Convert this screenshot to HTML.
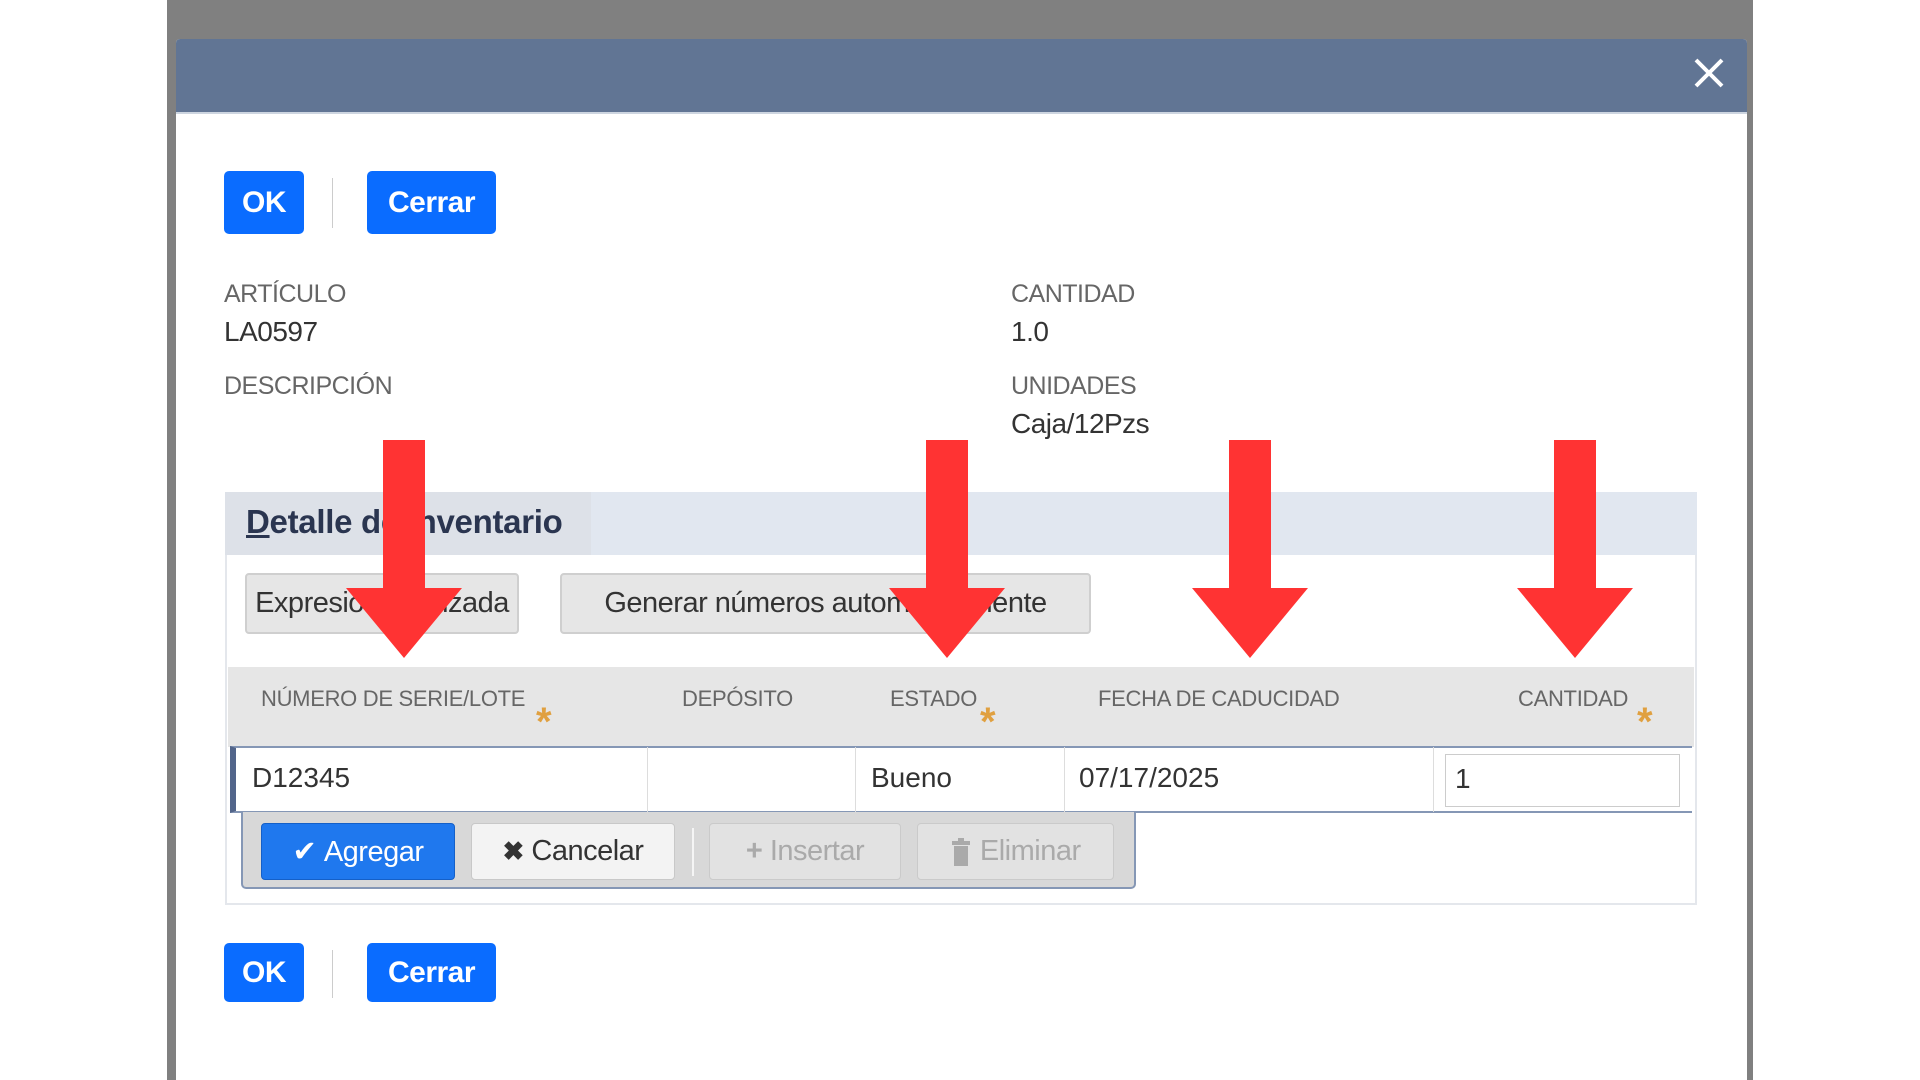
<!DOCTYPE html>
<html><head><meta charset="utf-8"><style>
*{margin:0;padding:0;box-sizing:border-box}
body{width:1920px;height:1080px;position:relative;overflow:hidden;background:#fff;font-family:"Liberation Sans Narrow","Liberation Sans",sans-serif;}
.a{position:absolute}
.btn{position:absolute;background:#0a6cff;color:#fff;border-radius:5px;font-size:30px;font-weight:bold;display:flex;align-items:center;justify-content:center;letter-spacing:-0.5px}
.lbl{position:absolute;font-size:25px;color:#666;letter-spacing:-0.5px}
.val{position:absolute;font-size:28px;color:#333;letter-spacing:-0.5px}
.gb{position:absolute;background:#e6e6e6;border:2px solid #cfcfcf;border-radius:4px;font-size:29px;color:#333;display:flex;align-items:center;justify-content:center;letter-spacing:-0.5px}
.th{position:absolute;top:686px;font-size:22px;color:#666;letter-spacing:-0.3px}
.ast{position:absolute;top:700px;color:#e0a040;font-size:40px;font-weight:bold}
.td{position:absolute;top:762px;font-size:28px;color:#333}
.vd{position:absolute;top:747px;height:65px;width:1px;background:#ddd}
.ab{position:absolute;top:823px;height:57px;border-radius:4px;font-size:29px;display:flex;align-items:center;justify-content:center;letter-spacing:-0.5px}
.arr{position:absolute;top:440px}
</style></head><body>
<div class="a" style="left:167px;top:0;width:1586px;height:1080px;background:#808080"></div>
<div class="a" style="left:176px;top:39px;width:1571px;height:1041px;background:#fff;border-radius:4px 4px 0 0;overflow:hidden">
  <div class="a" style="left:0;top:0;width:100%;height:75px;background:#617594;border-bottom:2px solid #cdd5e0"></div>
</div>
<svg class="a" style="left:1693px;top:57px" width="32" height="32" viewBox="0 0 32 32"><path d="M3 3L29 29M29 3L3 29" stroke="#fff" stroke-width="4"/></svg>

<div class="btn" style="left:224px;top:171px;width:80px;height:63px">OK</div>
<div class="a" style="left:332px;top:178px;width:1px;height:50px;background:#ccc"></div>
<div class="btn" style="left:367px;top:171px;width:129px;height:63px">Cerrar</div>

<div class="lbl" style="left:224px;top:280px">ARTÍCULO</div>
<div class="val" style="left:224px;top:316px">LA0597</div>
<div class="lbl" style="left:224px;top:372px">DESCRIPCIÓN</div>
<div class="lbl" style="left:1011px;top:280px">CANTIDAD</div>
<div class="val" style="left:1011px;top:316px">1.0</div>
<div class="lbl" style="left:1011px;top:372px">UNIDADES</div>
<div class="val" style="left:1011px;top:408px">Caja/12Pzs</div>

<div class="a" style="left:225px;top:492px;width:1472px;height:413px;border:2px solid #e4e7ec;border-top:none"></div>
<div class="a" style="left:225px;top:492px;width:1472px;height:63px;background:#e1e7f0"></div>
<div class="a" style="left:225px;top:492px;width:366px;height:63px;background:#dde1e8"></div>
<div class="a" style="left:246px;top:503px;font-size:33px;font-weight:bold;color:#2a3550;letter-spacing:-0.3px"><u>D</u>etalle de inventario</div>

<div class="gb" style="left:245px;top:573px;width:274px;height:61px">Expresión avanzada</div>
<div class="gb" style="left:560px;top:573px;width:531px;height:61px">Generar números automáticamente</div>

<div class="a" style="left:228px;top:667px;width:1466px;height:80px;background:#e6e6e6"></div>
<div class="th" style="left:261px">NÚMERO DE SERIE/LOTE</div>
<div class="th" style="left:682px">DEPÓSITO</div>
<div class="th" style="left:890px">ESTADO</div>
<div class="th" style="left:1098px">FECHA DE CADUCIDAD</div>
<div class="th" style="left:1518px">CANTIDAD</div>
<div class="ast" style="left:536px">*</div>
<div class="ast" style="left:980px">*</div>
<div class="ast" style="left:1637px">*</div>

<div class="a" style="left:230px;top:746px;width:1462px;height:67px;background:#fff;border-top:2px solid #8597b5;border-bottom:2px solid #8597b5;border-left:6px solid #52658a"></div>
<div class="vd" style="left:647px"></div><div class="vd" style="left:855px"></div><div class="vd" style="left:1064px"></div><div class="vd" style="left:1433px"></div>
<div class="td" style="left:252px">D12345</div>
<div class="td" style="left:871px">Bueno</div>
<div class="td" style="left:1079px">07/17/2025</div>
<div class="a" style="left:1445px;top:754px;width:235px;height:53px;border:1px solid #ccc;font-size:28px;color:#333;padding:8px 0 0 9px">1</div>

<div class="a" style="left:241px;top:812px;width:895px;height:77px;background:#d8d8d8;border:2px solid #8597b5;border-top:none;border-radius:0 0 5px 5px"></div>
<div class="ab" style="left:261px;width:194px;background:#1f78ee;color:#fff;border:1px solid #1560c8">✔&nbsp;Agregar</div>
<div class="ab" style="left:471px;width:204px;background:#f3f3f3;color:#333;border:1px solid #c8c8c8"><b style="font-size:26px">✖</b>&nbsp;Cancelar</div>
<div class="a" style="left:692px;top:828px;width:2px;height:48px;background:#f5f5f5"></div>
<div class="ab" style="left:709px;width:192px;background:#e2e2e2;color:#aaa;border:1px solid #cacaca"><b>+</b>&nbsp;Insertar</div>
<div class="ab" style="left:917px;width:197px;background:#e2e2e2;color:#aaa;border:1px solid #cacaca"><svg width="22" height="30" viewBox="0 0 22 30"><rect x="2" y="4" width="18" height="4" fill="#aaa"/><rect x="8" y="1" width="6" height="4" fill="#aaa"/><rect x="4" y="9" width="14" height="20" fill="#aaa"/></svg>&nbsp;Eliminar</div>

<div class="btn" style="left:224px;top:943px;width:80px;height:59px">OK</div>
<div class="a" style="left:332px;top:950px;width:1px;height:48px;background:#ccc"></div>
<div class="btn" style="left:367px;top:943px;width:129px;height:59px">Cerrar</div>

<svg class="arr" style="left:346px" width="116" height="220" viewBox="0 0 116 220"><path d="M37 0H79V148H116L58 218L0 148H37Z" fill="#ff3333"/></svg>
<svg class="arr" style="left:889px" width="116" height="220" viewBox="0 0 116 220"><path d="M37 0H79V148H116L58 218L0 148H37Z" fill="#ff3333"/></svg>
<svg class="arr" style="left:1192px" width="116" height="220" viewBox="0 0 116 220"><path d="M37 0H79V148H116L58 218L0 148H37Z" fill="#ff3333"/></svg>
<svg class="arr" style="left:1517px" width="116" height="220" viewBox="0 0 116 220"><path d="M37 0H79V148H116L58 218L0 148H37Z" fill="#ff3333"/></svg>
</body></html>
